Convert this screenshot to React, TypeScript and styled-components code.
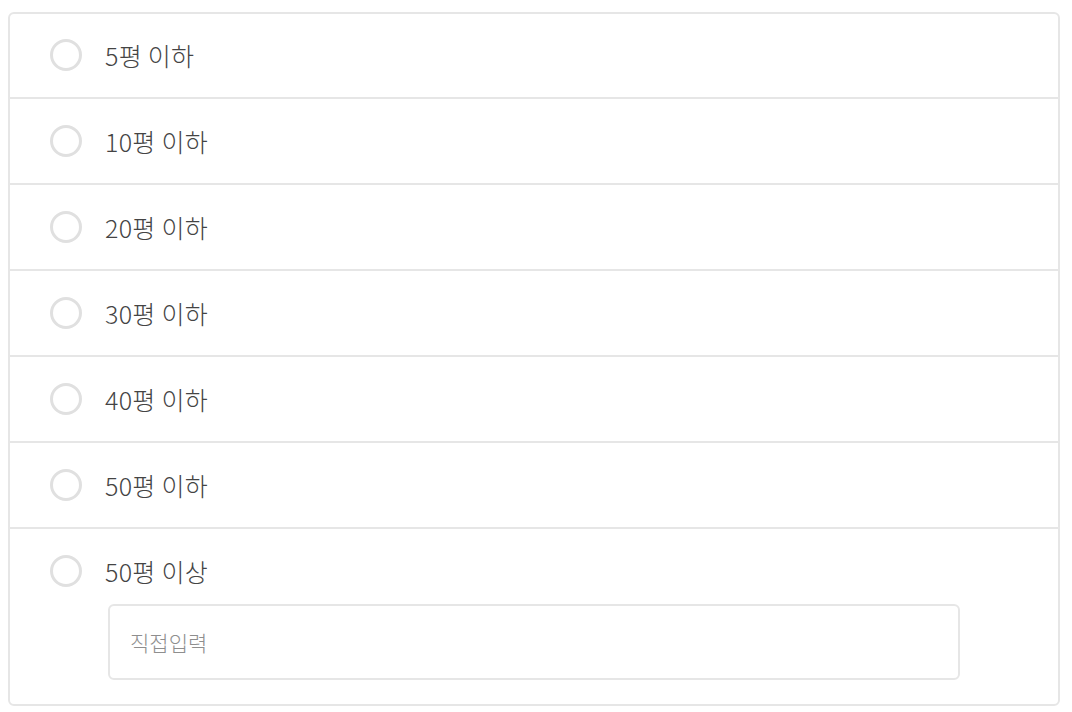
import React from "react";
import styled, { createGlobalStyle } from "styled-components";

const GlobalStyle = createGlobalStyle`
  html, body {
    margin: 0;
    padding: 0;
    background: #fff;
  }
  body {
    padding: 12px 12px 0 8px;
    font-family: "Noto Sans CJK KR", "Noto Sans", sans-serif;
  }
`;

const List = styled.div`
  width: 1048px;
  border: 2px solid #e6e6e6;
  border-radius: 6px;
  background: #fff;
  display: flex;
  flex-direction: column;
`;

const Row = styled.div<{ $last?: boolean }>`
  padding: 24px 40px;
  border-bottom: ${(p) => (p.$last ? "none" : "2px solid #e6e6e6")};
  display: flex;
  flex-direction: column;
  &:first-child {
    padding-top: 23px;
  }
`;

const Option = styled.label`
  display: flex;
  align-items: center;
  gap: 23px;
  height: 36px;
  cursor: pointer;
`;

const Radio = styled.span`
  box-sizing: border-box;
  width: 32px;
  height: 32px;
  border-radius: 50%;
  border: 3px solid #e0e0e0;
  flex-shrink: 0;
`;

const Label = styled.span`
  font-size: 25px;
  font-weight: 300;
  line-height: 36px;
  color: #444;
  letter-spacing: 0.3px;
`;

const Input = styled.input`
  box-sizing: border-box;
  margin: 15px 0 0 58px;
  width: 852px;
  height: 76px;
  border: 2px solid #e6e6e6;
  border-radius: 6px;
  padding: 0 20px;
  font-family: "Noto Sans CJK KR", "Noto Sans", sans-serif;
  font-size: 21px;
  font-weight: 300;
  color: #444;
  outline: none;
  &::placeholder {
    color: #8e8e8e;
  }
`;

const options = ["5평 이하", "10평 이하", "20평 이하", "30평 이하", "40평 이하", "50평 이하"];

const App: React.FC = () => (
  <>
    <GlobalStyle />
    <List>
      {options.map((o) => (
        <Row key={o}>
          <Option>
            <Radio />
            <Label>{o}</Label>
          </Option>
        </Row>
      ))}
      <Row $last>
        <Option>
          <Radio />
          <Label>50평 이상</Label>
        </Option>
        <Input placeholder="직접입력" />
      </Row>
    </List>
  </>
);

export default App;
